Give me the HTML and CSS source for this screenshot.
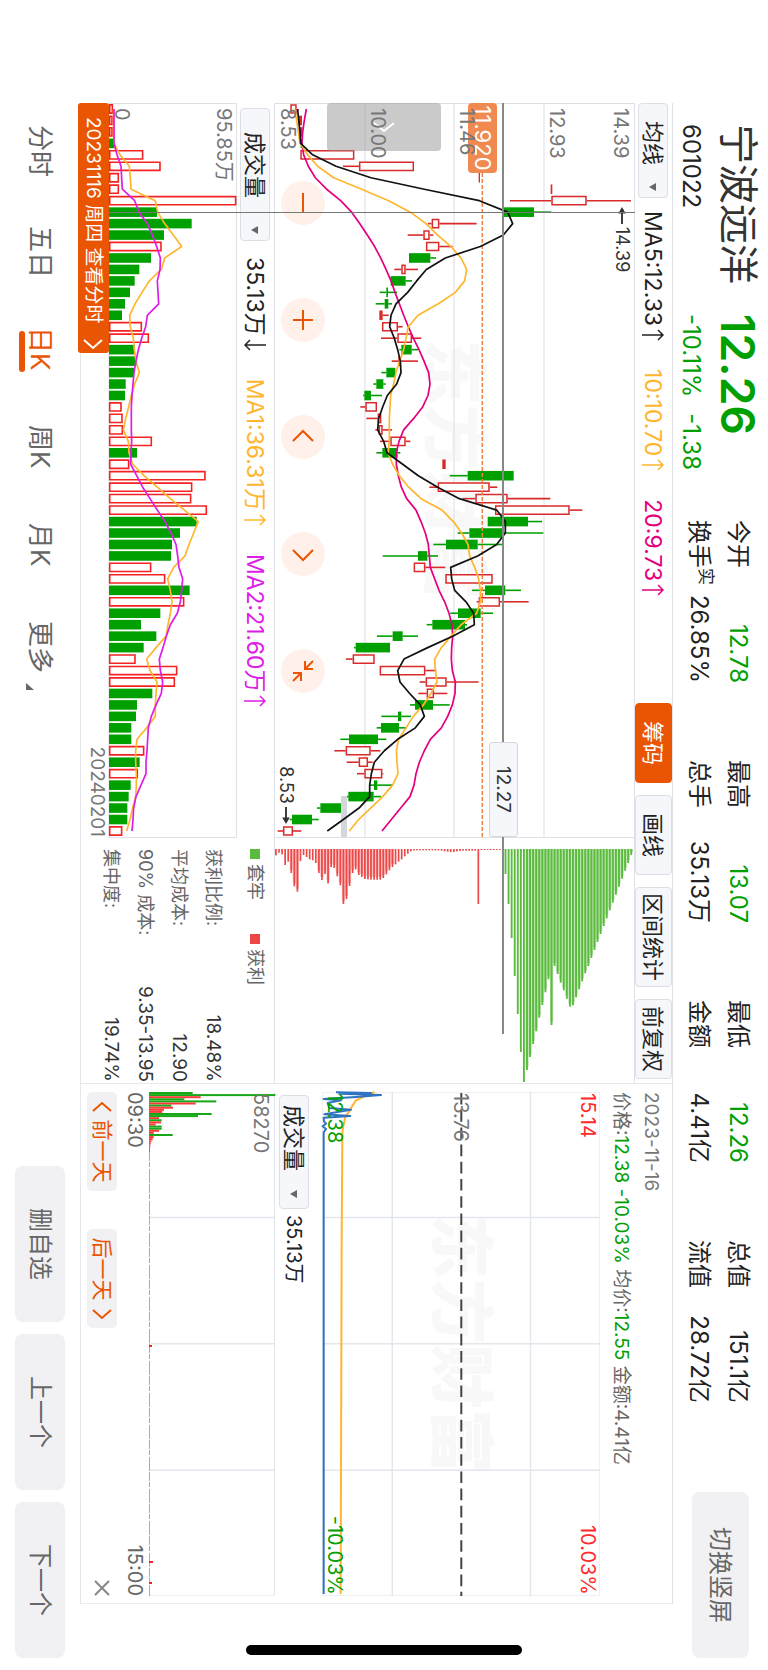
FILE: index.html
```html
<!DOCTYPE html>
<html lang="zh-CN">
<head>
<meta charset="utf-8">
<title>宁波远洋 601022</title>
<link rel="stylesheet" href="styles.css">
</head>
<body>
<div class="stage">
  <header class="header">
    <div class="name-block">
      <h1 class="stock-name">宁波远洋</h1>
      <div class="stock-sub">601022</div>
    </div>
    <div class="price-block down">
      <div class="price">12.26</div>
      <div class="stock-sub change"><span>-10.11%</span><span>-1.38</span></div>
    </div>
    <dl class="stats">
      <div class="stat"><dt>今开</dt><dd class="down">12.78</dd></div>
      <div class="stat"><dt>最高</dt><dd class="down">13.07</dd></div>
      <div class="stat"><dt>最低</dt><dd class="down">12.26</dd></div>
      <div class="stat"><dt>总值</dt><dd>151.1亿</dd></div>
      <div class="stat"><dt>换手<sup class="real">实</sup></dt><dd>26.85%</dd></div>
      <div class="stat"><dt>总手</dt><dd>35.13万</dd></div>
      <div class="stat"><dt>金额</dt><dd>4.41亿</dd></div>
      <div class="stat"><dt>流值</dt><dd>28.72亿</dd></div>
    </dl>
    <button class="soft-btn switch-btn" type="button">切换竖屏</button>
  </header>

  <main class="workspace">
    <section class="left">
      <div class="toolbar top-toolbar">
        <span class="picker picker-ma"><select aria-label="主图指标"><option>均线</option></select></span>
        <span>MA5:12.33<svg class="arrow" viewBox="0 0 18 22"><path d="M9 22V1M4 6l5-5 5 5"/></svg></span>
        <span class="c-orange">10:10.70<svg class="arrow" viewBox="0 0 18 22"><path d="M9 22V1M4 6l5-5 5 5"/></svg></span>
        <span class="c-pink">20:9.73<svg class="arrow" viewBox="0 0 18 22"><path d="M9 22V1M4 6l5-5 5 5"/></svg></span>
        <div class="tools">
          <button class="tool active" type="button">筹码</button>
          <button class="tool" type="button">画线</button>
          <button class="tool" type="button">区间统计</button>
          <button class="tool" type="button">前复权</button>
        </div>
      </div>

      <div class="pane kline">
        <div class="watermark">东方财富</div>
        <svg class="plot" id="kline" viewBox="0 0 734 361" preserveAspectRatio="none"></svg>
        <button class="side-tab" type="button" aria-label="展开"><svg viewBox="0 0 12 24"><path d="M2 2l8 10-8 10"/></svg></button>
        <span class="price-tag">11.920</span>
        <span class="axis a1">14.39</span>
        <span class="axis a2">12.93</span>
        <span class="axis a3">11.46</span>
        <span class="axis a4">10.00</span>
        <span class="axis a5">8.53</span>
        <span class="note note-high"><svg viewBox="0 0 18 10"><path d="M6 5h12" class="ln"/><path d="M0 5l7-4v8z"/></svg>14.39</span>
        <span class="note note-low">8.53<svg viewBox="0 0 18 10"><path d="M0 5h12" class="ln"/><path d="M18 5l-7-4v8z"/></svg></span>
        <div class="zoom-row">
          <button type="button" aria-label="缩小"><svg viewBox="0 0 44 44"><path d="M12 22h20"/></svg></button>
          <button type="button" aria-label="放大"><svg viewBox="0 0 44 44"><path d="M12 22h20M22 12v20"/></svg></button>
          <button type="button" aria-label="左移"><svg viewBox="0 0 44 44"><path d="M26 12l-10 10 10 10"/></svg></button>
          <button type="button" aria-label="右移"><svg viewBox="0 0 44 44"><path d="M18 12l10 10-10 10"/></svg></button>
          <button type="button" aria-label="收起"><svg viewBox="0 0 44 44"><path d="M12 12l8 8M20 12v8h-8M32 32l-8-8M24 32v-8h8"/></svg></button>
        </div>
      </div>

      <div class="pane chips">
        <svg class="plot" id="chips" viewBox="0 0 246 361" preserveAspectRatio="none"></svg>
      </div>

      <div class="toolbar vol-toolbar">
        <span class="picker picker-vol"><select aria-label="副图指标"><option>成交量</option></select></span>
        <span>35.13万<svg class="arrow" viewBox="0 0 18 22"><path d="M9 0v21M4 16l5 5 5-5"/></svg></span>
        <span class="c-orange">MA1:36.31万<svg class="arrow" viewBox="0 0 18 22"><path d="M9 22V1M4 6l5-5 5 5"/></svg></span>
        <span class="c-magenta">MA2:21.60万<svg class="arrow" viewBox="0 0 18 22"><path d="M9 22V1M4 6l5-5 5 5"/></svg></span>
      </div>

      <div class="pane volume">
        <svg class="plot" id="volume" viewBox="0 0 734 128" preserveAspectRatio="none"></svg>
        <span class="axis v1">95.85万</span>
        <span class="axis v2">0</span>
      </div>

      <div class="date-row">
        <button class="date-tag" type="button">20231116 周四 查看分时<svg viewBox="0 0 12 20"><path d="M2 1l8 9-8 9"/></svg></button>
        <time class="last-date">20240201</time>
      </div>

      <div class="chip-info">
        <div class="legend"><span class="lg-green">套牢</span><span class="lg-red">获利</span></div>
        <dl class="chip-stats">
          <div><dt>获利比例:</dt><dd>18.48%</dd></div>
          <div><dt>平均成本:</dt><dd>12.90</dd></div>
          <div><dt>90% 成本:</dt><dd>9.35-13.95</dd></div>
          <div><dt>集中度:</dt><dd>19.74%</dd></div>
        </dl>
      </div>

      <i class="cross-v"></i>
      <i class="cross-h"></i>
      <output class="cross-tag">12.27</output>
    </section>

    <section class="right">
      <time class="day">2023-11-16</time>
      <p class="day-info">价格:<b class="down">12.38 -10.03%</b> 均价:<b class="down">12.55</b> 金额:4.41亿</p>
      <div class="pane intraday">
        <div class="watermark">东方财富</div>
        <svg class="plot" id="intraday" viewBox="0 0 504 278" preserveAspectRatio="none"></svg>
        <span class="axis up i1">15.14</span>
        <span class="axis up i2">10.03%</span>
        <span class="axis i3">13.76</span>
        <span class="axis down i4">12.38</span>
        <span class="axis down i5">-10.03%</span>
      </div>
      <div class="toolbar intra-toolbar">
        <span class="picker picker-intra"><select aria-label="分时指标"><option>成交量</option></select></span>
        <span>35.13万</span>
      </div>
      <div class="pane intravol">
        <svg class="plot" id="intravol" viewBox="0 0 504 126" preserveAspectRatio="none"></svg>
        <span class="axis w1">58270</span>
      </div>
      <div class="times"><time>09:30</time><time>15:00</time></div>
      <div class="day-nav">
        <button class="day-btn" type="button"><svg viewBox="0 0 12 20"><path d="M10 1l-8 9 8 9"/></svg>前一天</button>
        <button class="day-btn" type="button">后一天<svg viewBox="0 0 12 20"><path d="M2 1l8 9-8 9"/></svg></button>
        <button class="close" type="button" aria-label="关闭"><svg viewBox="0 0 16 16"><path d="M1 1l14 14M15 1L1 15"/></svg></button>
      </div>
    </section>
  </main>

  <footer class="footer">
    <nav class="periods">
      <a href="#">分时</a>
      <a href="#">五日</a>
      <a href="#" class="current">日K</a>
      <a href="#">周K</a>
      <a href="#">月K</a>
      <a href="#" class="more">更多</a>
    </nav>
    <div class="actions">
      <button class="soft-btn" type="button">删自选</button>
      <button class="soft-btn" type="button">上一个</button>
      <button class="soft-btn" type="button">下一个</button>
    </div>
  </footer>
  <i class="home-bar"></i>
</div>
<script src="app.js"></script>
</body>
</html>
```
FILE: styles.css
```css
* { box-sizing: border-box; margin: 0; padding: 0; }

html, body { height: 100%; background: #fff; overflow: hidden; }

body {
  font-family: Inter, "Noto Sans CJK SC", sans-serif;
  font-size: 23px;
  line-height: 30px;
  color: #222;
}

button, select { font: inherit; color: inherit; border: 0; background: none; appearance: none; white-space: nowrap; }
a { color: inherit; text-decoration: none; }
svg { display: block; fill: none; stroke: currentColor; }

/* landscape screen turned a quarter clockwise */
.stage {
  position: absolute;
  top: 0;
  left: 100%;
  width: 100vh;
  height: 100vw;
  transform: rotate(90deg);
  transform-origin: top left;
  display: grid;
  grid-template-rows: 95px minmax(0, 1fr) 80px;
  background: #fff;
}

.down { color: #00a000; }
.up { color: #ff2a2a; }
.c-orange { color: #ffb62e; }
.c-pink { color: #e5007f; }
.c-magenta { color: #dd1ee6; }

/* header */
.header {
  display: grid;
  grid-template-columns: 190px 206px minmax(0, 1fr) 166px;
  padding: 0 12px 0 124px;
}
.name-block, .price-block { display: grid; grid-template-rows: 60px 34px; align-items: center; white-space: nowrap; }
.stock-name { font-size: 40px; font-weight: 400; line-height: 60px; color: #333; }
.stock-sub { font-size: 24px; line-height: 34px; }
.price { font-size: 46px; font-weight: 600; line-height: 60px; }
.change { display: flex; gap: 16px; }
.stats {
  display: grid;
  grid-template-columns: repeat(4, 163px);
  grid-template-rows: 39px 39px;
  column-gap: 77px;
  padding-top: 10px;
}
.stat { display: flex; justify-content: space-between; font-size: 24px; line-height: 39px; white-space: nowrap; }
.stat dt { display: flex; }
.real { font-size: 17px; line-height: 26px; vertical-align: baseline; }
.soft-btn { height: 50px; border-radius: 8px; background: #f1f1f3; color: #666; font-size: 24px; }
.switch-btn { height: 57px; margin-top: 19px; }

/* workspace */
.workspace {
  display: grid;
  grid-template-columns: minmax(0, 980fr) minmax(0, 521fr);
  margin: 0 66px 0 103px;
  border-top: 1px solid #dfe1e8;
  border-bottom: 1px solid #e4e6ec;
  min-height: 0;
}
.left {
  position: relative;
  display: grid;
  grid-template-columns: 734fr 246fr;
  grid-template-rows: 37px 361fr 37px 128fr 28px;
}
.pane { position: relative; min-height: 0; min-width: 0; }
.plot { position: absolute; inset: 0; width: 100%; height: 100%; overflow: visible; }
.plot * { vector-effect: non-scaling-stroke; }

.toolbar { display: flex; align-items: center; white-space: nowrap; }
.top-toolbar { grid-column: 1 / 3; padding-right: 4px; }
.toolbar > span { display: flex; align-items: center; }
.toolbar > span + span { margin-left: 25px; }
.toolbar > .picker + span { margin-left: 13px; }
.vol-toolbar > .picker + span { margin-left: 16px; }
.arrow { width: 18px; height: 22px; stroke-width: 1.5; }

.picker { position: relative; height: 30px; border: 1px solid #dcdfe5; border-radius: 4px; background: #f5f7fa; font-size: 22px; }
.picker::after {
  content: "";
  position: absolute;
  right: 6px;
  top: 11px;
  border: 4px solid transparent;
  border-top: 7px solid #666;
  border-bottom: 0;
}
.picker select { width: 100%; height: 28px; line-height: 28px; }
.picker-ma { width: 95px; }
.picker-ma select { padding-left: 17px; }
.picker-vol { width: 133px; margin-left: 5px; }
.picker-vol select { padding-left: 23px; }
.picker-intra { width: 114px; margin-left: 3px; }
.picker-intra::after { right: 10px; }
.picker-intra select { padding-left: 9px; }

.tools { display: flex; gap: 12px; margin-left: auto; }
.tool { height: 37px; min-width: 80px; padding: 0 5px; border: 1px solid #dcdfe5; border-radius: 4px; background: #f5f7fa; font-size: 22px; }
.tool.active { background: #ea5504; border-color: #ea5504; color: #fff; }

.watermark {
  position: absolute;
  left: 50%;
  top: 50%;
  transform: translate(-50%, -50%);
  font-size: 65px;
  font-weight: 900;
  line-height: 70px;
  color: #f8f8f8;
  white-space: nowrap;
}

.axis { position: absolute; left: 5px; font-size: 20px; line-height: 24px; color: #777; white-space: nowrap; }
.axis.up { color: #ff2a2a; }
.axis.down { color: #00a000; }
.a1 { top: 2px; }
.a2 { top: 66px; }
.a3 { top: 156px; }
.a4 { top: 245px; }
.a5 { bottom: 2px; }
.v1 { top: 1px; }
.v2 { bottom: 1px; }

.side-tab { position: absolute; left: 0; top: 194px; width: 48px; height: 114px; border-radius: 4px; background: rgba(150, 150, 150, 0.5); color: #fff; }
.side-tab svg { width: 12px; height: 24px; margin-left: 18px; stroke-width: 2; }
.price-tag { position: absolute; left: 0; top: 138px; width: 70px; height: 29px; border-radius: 4px; background: #f08a50; color: #fff; font-size: 22px; line-height: 29px; text-align: center; }

.note { position: absolute; display: flex; align-items: center; gap: 3px; font-size: 18px; line-height: 24px; color: #333; }
.note svg { width: 17px; height: 10px; fill: #333; stroke: none; }
.note .ln { stroke: #333; stroke-width: 2; }
.note-high { left: 104px; top: 1px; }
.note-low { right: 13px; bottom: 0; }

.zoom-row { position: absolute; left: 78px; bottom: 7px; display: flex; gap: 73px; }
.zoom-row button { width: 44px; height: 44px; border-radius: 50%; background: #fff1ea; color: #ea5504; }
.zoom-row svg { width: 44px; height: 44px; stroke-width: 2; }

.date-row { display: flex; justify-content: space-between; }
.date-tag { display: flex; align-items: center; justify-content: space-between; width: 250px; height: 31px; padding: 0 3px 0 14px; border-radius: 3px; background: #ea5504; color: #fff; font-size: 19px; position: relative; }
.date-tag svg { width: 12px; height: 20px; stroke-width: 2; }
.last-date { font-size: 19px; line-height: 24px; color: #777; }

.chip-info { grid-column: 2; grid-row: 3 / 6; padding: 6px 1px 0 12px; font-size: 18px; color: #666; }
.legend { display: flex; gap: 34px; line-height: 26px; }
.legend span { display: flex; align-items: center; gap: 5px; }
.legend span::before { content: ""; width: 10px; height: 10px; background: #5bbb3e; }
.legend .lg-red::before { background: #ee4646; }
.chip-stats { padding-top: 12px; }
.chip-stats div { display: flex; justify-content: space-between; line-height: 34px; }
.chip-stats dd { font-size: 19px; color: #333; }

.cross-v { position: absolute; left: 11.1%; top: 37px; bottom: 28px; width: 1px; background: #777; }
.cross-h { position: absolute; left: 0; top: 168px; width: 95%; height: 2px; background: #888; }
.cross-tag { position: absolute; right: 25.1%; top: 154px; width: 95px; height: 29px; border: 1px solid #d4d7dc; border-radius: 3px; background: #f5f7fa; font-size: 19px; line-height: 27px; text-align: center; color: #333; }

/* intraday side */
.right {
  display: grid;
  grid-template-rows: 37px 35px 278fr 47px 126fr 30px 38px;
  border-left: 1px solid #e8e8ea;
  border-right: 1px solid #ededf0;
  padding: 0 7px 0 8px;
}
.day { font-size: 19px; line-height: 42px; color: #777; }
.day-info { font-size: 19px; line-height: 28px; color: #666; white-space: nowrap; }
.day-info b { font-weight: 400; }
.right .axis { left: 1px; }
.i1 { top: 0; }
.right .i2 { left: auto; right: 1px; top: 0; }
.i3 { top: 127px; }
.i4 { bottom: 1px; }
.right .i5 { left: auto; right: 1px; bottom: 1px; }
.w1 { top: 2px; }
.intra-toolbar { font-size: 20px; padding-top: 8px; }
.intra-toolbar > .picker + span { margin-left: 6px; }
.times { display: flex; justify-content: space-between; font-size: 20px; line-height: 28px; color: #666; }
.day-nav { display: flex; align-items: flex-start; padding-top: 2px; }
.day-btn { display: flex; align-items: center; justify-content: center; gap: 7px; width: 99px; height: 30px; margin-right: 38px; border-radius: 5px; background: #f1f1f3; color: #ea5504; font-size: 21px; }
.day-btn svg { width: 12px; height: 20px; stroke-width: 2; }
.close { width: 16px; height: 30px; margin-left: auto; color: #888; }
.close svg { width: 16px; height: 16px; stroke-width: 2; }

/* footer */
.footer { display: flex; justify-content: space-between; align-items: center; padding: 0 12px 0 125px; }
.periods { display: flex; gap: 49px; font-size: 26px; line-height: 40px; color: #666; white-space: nowrap; }
.periods a { position: relative; min-width: 49px; }
.periods .current { color: #ea5504; }
.periods .current::after { content: ""; position: absolute; left: 4px; right: 4px; bottom: -1px; height: 6px; border-radius: 3px; background: #ea5504; }
.periods .more::after { content: ""; position: absolute; right: -17px; bottom: 6px; border-left: 7px solid transparent; border-bottom: 8px solid #666; }
.actions { display: flex; gap: 12px; }
.actions .soft-btn { width: 156px; }

.home-bar { position: absolute; right: 15px; top: 32%; bottom: 32%; width: 10px; border-radius: 5px; background: #000; }
```
FILE: app.js
```js
const RED = '#d92b2b', GREEN = '#00a000', VRED = '#f52222';
const STEP = 11.46, START = 6;
const xAt = i => START + STEP * i;

function line(x1, y1, x2, y2, stroke, w = 1, extra = '') {
  return `<line x1="${x1}" y1="${y1}" x2="${x2}" y2="${y2}" stroke="${stroke}" stroke-width="${w}" ${extra}/>`;
}
function rect(x, y, w, h, fill, stroke = 'none', sw = 0) {
  return `<rect x="${x}" y="${y}" width="${w}" height="${h}" fill="${fill}" stroke="${stroke}" stroke-width="${sw}"/>`;
}
function poly(points, stroke, w = 2) {
  return `<polyline points="${points.map(p => p.join(',')).join(' ')}" fill="none" stroke="${stroke}" stroke-width="${w}" stroke-linejoin="round"/>`;
}

/* daily candles: colour, low, body bottom, body top, high */
const candles = [
  'R 103 103 122 122', 'R 128 128 138 138', 'R 132 132 139 139', 'G 132 134 139 141', 'R 133 133 295 295', 'R 261 309 474 474',
  'R 668 668 672 672', 'R 884 884 889 889', 'R 762 886 992 1125', 'G 743 743 834 886', 'R 516 527 550 662', 'R 455 502 521 532',
  'R 510 510 550 590', 'G 459 459 523 540', 'R 415 436 449 486', 'G 404 404 449 468', 'G 371 391 396 423', 'G 359 386 397 408',
  'R 370 370 380 398', 'R 378 378 426 440', 'R 375 424 468 496', 'G 430 436 467 486', 'R 407 427 432 486', 'G 376 391 418 418',
  'G 352 361 382 389', 'G 321 325 345 378', 'R 313 328 363 363', 'R 331 365 376 376', 'R 358 368 380 408', 'R 372 403 449 463',
  'G 361 379 425 433', 'R 559 559 569 569', 'G 581 635 773 773', 'R 520 545 701 724', 'R 620 658 755 883', 'R 717 717 941 979',
  'G 695 695 816 858', 'G 605 640 742 862', 'G 532 570 665 742', 'G 380 486 514 546', 'R 473 473 508 568', 'R 568 568 710 710',
  'G 648 687 748 795', 'R 662 668 732 818', 'G 583 606 674 711', 'G 512 529 627 633', 'G 363 410 440 486', 'G 294 299 402 402',
  'R 270 290 356 356', 'R 371 371 508 541', 'R 491 509 572 668', 'R 487 512 534 574', 'G 462 477 531 581', 'G 376 426 436 465',
  'G 362 375 429 452', 'G 253 279 366 391', 'R 235 269 344 373', 'R 272 308 336 350', 'R 303 325 379 382', 'G 339 354 364 408',
  'G 273 277 353 375', 'G 183 193 255 255', 'G 101 108 168 188', 'R 65 81 111 136'
].map(s => s.split(' ').map((v, k) => (k ? +v : v)));

const ma5 = [125,128,132,134,170,240,345,505,670,755,770,742,673,568,511,482,455,420,405,401,415,425,433,435,422,394,380,368,365,383,393,440,487,545,610,722,748,748,722,665,584,587,596,630,653,655,590,515,444,425,432,461,493,505,478,425,385,355,346,341,341,309,262,214];
const ma10 = [116,122,127,132,155,185,233,317,398,463,510,545,585,615,632,626,598,547,486,457,450,443,431,420,413,404,402,400,400,400,396,410,430,458,495,558,592,617,636,641,656,668,673,673,662,615,585,556,536,538,543,525,502,472,450,428,421,423,426,410,380,344,308,280];
const ma20 = [151,145,140,138,143,157,178,212,254,287,311,334,356,374,390,405,417,430,443,457,472,489,504,518,522,516,500,473,443,429,421,421,427,436,452,480,495,508,517,520,523,536,549,566,579,588,590,587,586,589,598,597,589,575,556,523,505,490,480,474,462,434,406,378];

const level = v => 379 - v / 3;

function drawKline() {
  let s = '';
  for (const y of [91, 181, 270]) s += line(0, y, 734, y, '#e6e8ef', 1.5);
  s += rect(0.5, 0.5, 734, 360, 'none', '#dfe0e5', 1);
  s += rect(693, 288, 41, 6, '#d3d6da');
  candles.forEach(([c, lo, b, t, hi], i) => {
    const x = xAt(i), col = c === 'R' ? RED : GREEN;
    const yb = level(b), yt = level(t);
    if (hi > t) s += line(x, level(hi), x, yt, col, 1.6);
    if (lo < b) s += line(x, yb, x, level(lo), col, 1.6);
    if (c === 'G' || t - b <= 10) s += rect(x - 4.8, yt, 9.6, yb - yt, col);
    else s += rect(x - 4.1, yt + 0.7, 8.2, yb - yt - 1.4, '#fff', col, 1.5);
  });
  s += line(70, 152.7, 734, 152.7, '#f08040', 1.5, 'stroke-dasharray="4 2"');
  s += poly(ma20.map((v, i) => [xAt(i), level(v)]), '#e5007f', 1.7);
  s += poly(ma10.map((v, i) => [xAt(i), level(v)]), '#ffb62e', 1.7);
  s += poly(ma5.map((v, i) => [xAt(i), level(v)]), '#111', 1.7);
  document.getElementById('kline').innerHTML = s;
}

/* daily volume, signed: positive for a rise, negative for a fall */
const volumes = [339,338,338,-342,430,482,357,357,709,-471,-575,-492,485,-453,-418,-404,-390,-375,-366,426,447,-405,-410,-402,-377,-375,365,368,369,456,-411,388,617,577,574,621,-590,-540,-516,-513,454,496,-569,553,-481,-423,-469,-431,407,532,525,-457,-411,-408,-394,-394,433,-419,414,-392,-386,-382,-382,367];
const vma1 = [341,341,341,342,360,388,391,393,466,473,494,520,545,494,484,448,426,405,389,391,400,403,408,418,404,394,386,377,370,385,387,398,432,472,511,553,595,581,567,555,521,503,511,516,511,504,498,468,440,450,471,468,466,466,440,411,407,407,409,409,407,398,390,380];
const vma2 = [342,342,342,342,351,363,365,367,404,417,442,457,470,481,480,472,474,476,442,437,425,415,408,402,399,396,394,394,394,395,393,392,410,428,450,472,495,513,528,533,537,548,545,541,532,511,499,489,478,481,488,484,468,454,445,443,441,438,438,423,408,401,399,396];

function drawVolume() {
  const y = v => 128 - (v - 327) / 3;
  let s = rect(0.5, 0.5, 734, 127.5, 'none', '#dfe0e5', 1);
  volumes.forEach((v, i) => {
    const x = xAt(i), top = y(Math.abs(v)), h = 128 - top;
    s += v < 0 ? rect(x - 4.8, top, 9.6, h, GREEN) : rect(x - 4.1, top + 0.7, 8.2, h - 1.4, '#fff', VRED, 1.6);
  });
  s += poly(vma1.map((v, i) => [xAt(i), y(v)]), '#ffb62e', 1.7);
  s += poly(vma2.map((v, i) => [xAt(i), y(v)]), '#dd1ee6', 1.7);
  document.getElementById('volume').innerHTML = s;
}

/* chip distribution, bottom price first */
const profit = [48,40,45,77,67,101,141,157,65,47,53,60,63,71,101,122,104,132,83,86,111,138,194,179,140,101,90,107,113,119,120,121,121,121,121,116,105,93,83,75,67,60,51,43,36,33,33,33,33,33,33,33,33,33,34,36,37,38,38,36,35,34,34,34,34,34,194,31,31,31,31,31,31,31];
const trapped = [104,194,296,410,524,638,728,692,653,614,576,535,497,459,420,557,380,404,430,453,478,502,498,474,450,426,402,380,356,332,308,284,260,237,213,190,166,142,118,94,71,47];

function drawChips() {
  let s = line(0, 360.5, 246, 360.5, '#dfe0e5') + line(0, 0.5, 246, 0.5, '#dfe0e5');
  profit.forEach((v, k) => {
    const y = level(60 + 9.2 * k), w = Math.max((v - 29) / 3, 1);
    if (w > 16 && k !== 66) s += rect(12, y - 1.5, w - 3, 3.1, '#f8b6b6');
    s += rect(12, y - 0.8, w, 1.7, '#ec4848');
  });
  trapped.forEach((v, k) => {
    const y = level(749 + 9.2 * k), w = (v - 29) / 3;
    if (k > 6) s += rect(12, y - 1.5, Math.max(w - 3, 1), 3.1, '#b4e0a6');
    s += rect(12, y - 0.8, w, 1.9, '#5bbb3e');
  });
  document.getElementById('chips').innerHTML = s;
}

function drawIntraday() {
  const pt = ([c, t]) => [(t - 757) / 3, 344 - c / 3];
  let s = rect(0.5, 0.5, 503, 277, 'none', '#eeeff2', 1);
  for (const y of [69.5, 207.7]) s += line(0, y, 504, y, '#e4e6ee', 1.4);
  for (const x of [125.5, 251.8, 378.3]) s += line(x, 0, x, 277, '#e4e6ee', 1.4);
  s += line(1, 138.7, 504, 138.7, '#444', 2, 'stroke-dasharray="11.6 5.6"');
  const avg = [[355,757],[330,768],[300,782],[288,800],[280,815],[268,830],[264,850],[260,870],[259,900],[257,1200],[254,2263]];
  const cur = [[240,758],[345,760],[250,762],[375,766],[300,772],[203,778],[255,782],[215,790],[220,805],[285,810],[205,824],[283,829],[203,834],[204,845],[210,852],[200,860],[210,868],[203,878],[203,2263]];
  s += poly(avg.map(pt), '#ffb62e', 2);
  s += poly(cur.map(pt), '#2f74c0', 2);
  document.getElementById('intraday').innerHTML = s;
}

const minutes = [-579,-827,603,-554,-650,588,-515,520,493,488,-636,-595,478,-486,484,468,-486,-486,478,462,-519,462,459,455,453,452,451,451,451];

function drawIntravol() {
  let s = line(0, 0.5, 504, 0.5, '#e4e6ee') + line(503.5, 0, 503.5, 126, '#eeeff2');
  for (const x of [125.5, 251.8, 378.3]) s += line(x, 0, x, 126, '#e4e6ee', 1.4);
  minutes.forEach((v, k) => {
    const h = (Math.abs(v) - 448) / 3;
    s += rect(k * 2.1, 126 - h, 2, h, v < 0 ? '#17a817' : '#f83a3a');
  });
  s += line(60, 125.5, 504, 125.5, '#f58a8a', 1, 'stroke-dasharray="9 1 5 2 14 1"');
  for (const [x, h] of [[253, 3], [469, 4], [490, 3]]) s += rect(x, 126 - h, 2, h, '#f52222');
  document.getElementById('intravol').innerHTML = s;
}

drawKline();
drawVolume();
drawChips();
drawIntraday();
drawIntravol();
```
